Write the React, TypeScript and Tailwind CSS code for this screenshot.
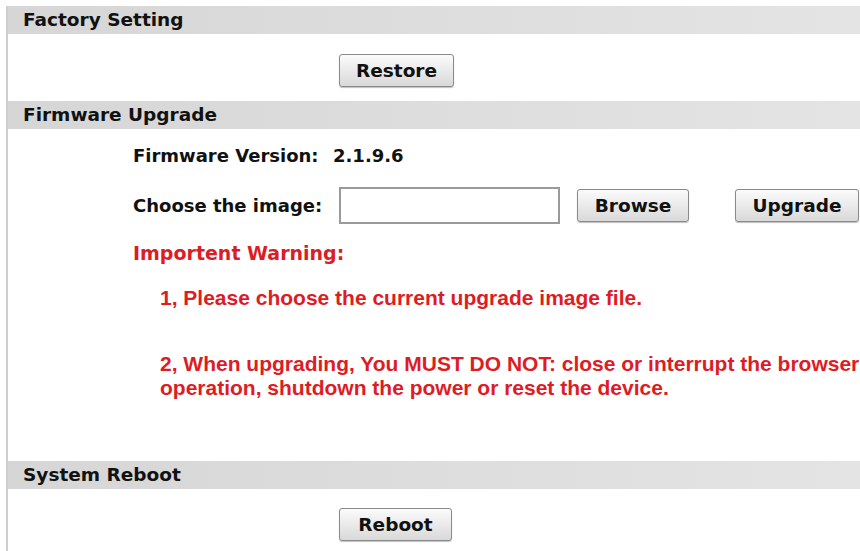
import React from "react";

const font = "font-['DejaVu_Sans',sans-serif] font-bold";
const head = font + " text-[18.5px] text-[#111] flex items-center pl-[15px] bg-gradient-to-r from-[#d6d6d6] to-[#e4e4e4]";
const label = font + " text-[18px] text-[#111]";
const btn =
  font +
  " text-[18.5px] text-[#111] border border-[#8a8a8a] rounded-[3px] bg-gradient-to-b from-[#fbfbfb] to-[#d9d9d9] shadow-[0_1px_1px_rgba(0,0,0,0.25)] flex items-center justify-center";
const red = "font-['Liberation_Sans',sans-serif] font-bold text-[#dd1c24] text-[21px] leading-[24px]";

export default function App() {
  return (
    <div className="w-[860px] h-[551px] bg-white overflow-hidden pt-[6px]">
      <div className="ml-[6px] border-l-2 border-[#cfcfcf] h-full">
        <div className={head + " h-[28px]"}>Factory Setting</div>
        <div className="pl-[331px] mt-[20px]">
          <button className={btn + " w-[115px] h-[33px]"}>Restore</button>
        </div>

        <div className={head + " h-[28px] mt-[14px]"}>Firmware Upgrade</div>
        <div className="pl-[125px] mt-[14px] flex items-center h-[24px]">
          <span className={label + " w-[200px]"}>Firmware Version:</span>
          <span className={label}>2.1.9.6</span>
        </div>
        <div className="pl-[125px] mt-[20px] flex items-center h-[37px]">
          <span className={label + " w-[206px]"}>Choose the image:</span>
          <div className="w-[221px] h-[37px] border-2 border-[#9a9a9a] bg-white" />
          <button className={btn + " w-[112px] h-[33px] ml-[17px]"}>Browse</button>
          <button className={btn + " w-[124px] h-[33px] ml-[46px]"}>Upgrade</button>
        </div>
        <div className={"pl-[125px] mt-[17px] h-[24px] flex items-center " + font + " text-[19px] text-[#dd1c24]"}>
          Importent Warning:
        </div>
        <div className="pl-[152px] mt-[21px] flex flex-col">
          <p className={red}>1, Please choose the current upgrade image file.</p>
          <p className={red + " mt-[42px]"}>
            2, When upgrading, You MUST DO NOT: close or interrupt the browser
            <br />
            operation, shutdown the power or reset the device.
          </p>
        </div>

        <div className={head + " h-[28px] mt-[61px]"}>System Reboot</div>
        <div className="pl-[331px] mt-[19px]">
          <button className={btn + " w-[113px] h-[33px]"}>Reboot</button>
        </div>
      </div>
    </div>
  );
}
